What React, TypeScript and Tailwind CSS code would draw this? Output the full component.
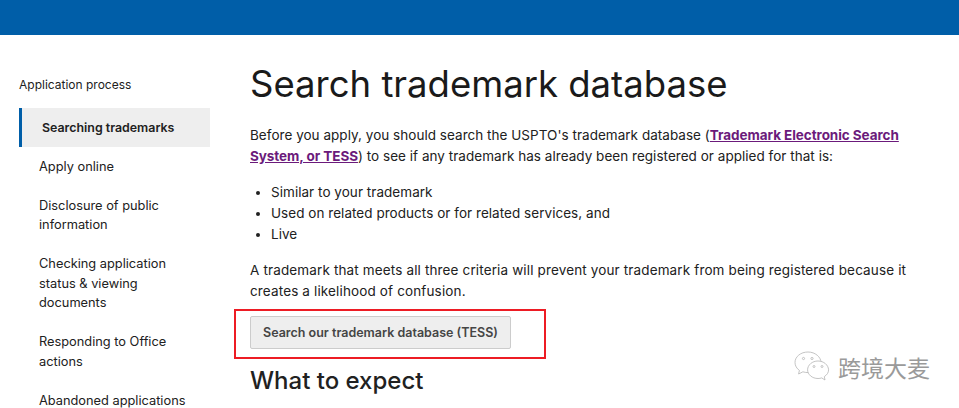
const sideItems = [
  ["Apply online"],
  ["Disclosure of public", "information"],
  ["Checking application", "status & viewing", "documents"],
  ["Responding to Office", "actions"],
  ["Abandoned applications"],
];

const App = () => {
  return (
    <div className="relative h-[408px] w-[959px] overflow-hidden bg-white font-['Inter',sans-serif] text-[#212121]">
      <div className="h-[35px] bg-[#005ea8]" />
      <div className="flex">
        <nav className="ml-[19px] w-[191px] shrink-0 pt-[40px] text-[12.8px] leading-[19.5px] text-[#212121]">
          <div className="h-[33px] text-[12px]">Application process</div>
          <div className="flex h-[39px] items-center border-l-[3px] border-[#005ea8] bg-[#eeeeee] pl-[20px] text-[12.4px] font-semibold">
            Searching trademarks
          </div>
          <ul className="mt-[9.700px] flex flex-col gap-[19.500px] pl-[20px]">
            {sideItems.map((lines) => (
              <li key={lines[0]}>
                {lines.map((l) => (
                  <div key={l}>{l}</div>
                ))}
              </li>
            ))}
          </ul>
        </nav>
        <main className="ml-[40px] w-[664px] text-[13.5px] leading-[21px]">
          <h1 className="mt-[27px] text-[36.500px] font-normal leading-[44px] text-[#1a1a1a]">
            Search trademark database
          </h1>
          <p className="mt-[19px] tracking-[0.03px]">
            Before you apply, you should search the USPTO's trademark database (
            <a className="font-bold tracking-[-0.06px] text-[#6b1a7b] underline">
              Trademark Electronic Search System, or TESS
            </a>
            ) to see if any trademark has already been registered or applied for that is:
          </p>
          <ul className="mt-[15px] list-disc pl-[21px] tracking-[0.04px]">
            <li>Similar to your trademark</li>
            <li>Used on related products or for related services, and</li>
            <li>Live</li>
          </ul>
          <p className="mt-[15px] tracking-[0.14px]">
            A trademark that meets all three criteria will prevent your trademark from being
            registered because it creates a likelihood of confusion.
          </p>
          <div className="relative mt-[14px] w-fit">
            <button className="flex h-[33px] w-[261px] items-center justify-center rounded-[2px] border border-[#cccccc] bg-[#eeeeee] text-[12.5px] font-semibold text-[#454545]">
              Search our trademark database (TESS)
            </button>
            <div className="absolute left-[-16px] top-[-7px] h-[50px] w-[312px] border-2 border-[#ed1c24]" />
          </div>
          <h2 className="mt-[17px] text-[24px] font-medium leading-[30px]">What to expect</h2>
        </main>
      </div>
      <div className="absolute left-[794px] top-[351px] flex items-center gap-[8px]">
        <svg width="36" height="32" viewBox="0 0 36 32" fill="#ffffff" stroke="#b5b5b5" strokeWidth="0.8">
          <path d="M14 1C6.800 1 1 5.600 1 11.500c0 3.200 1.700 6 4.400 7.900L4.600 23l4.300-2.200c1.600.5 3.300.8 5.100.8 7.200 0 13-4.700 13-10.100S21.200 1 14 1z" />
          <path d="M24 10c-5.800 0-10.400 4-10.400 8.800S18.200 27.500 24 27.500c1.300 0 2.600-.2 3.700-.6l3.300 2.100-.7-3.400c2.600-1.600 4.300-4 4.300-6.800C34.300 14 29.800 10 24 10z" />
          <circle cx="9.500" cy="7.500" r="1.100" fill="none" />
          <circle cx="18" cy="7.500" r="1.100" fill="none" />
          <circle cx="20" cy="15.500" r="1" fill="none" />
          <circle cx="28" cy="15.500" r="1" fill="none" />
        </svg>
        <span className="font-['Noto_Sans_CJK_SC',sans-serif] text-[23px] leading-[28px] text-[#9a9a9a]">跨境大麦</span>
      </div>
    </div>
  );
};

export default App;
